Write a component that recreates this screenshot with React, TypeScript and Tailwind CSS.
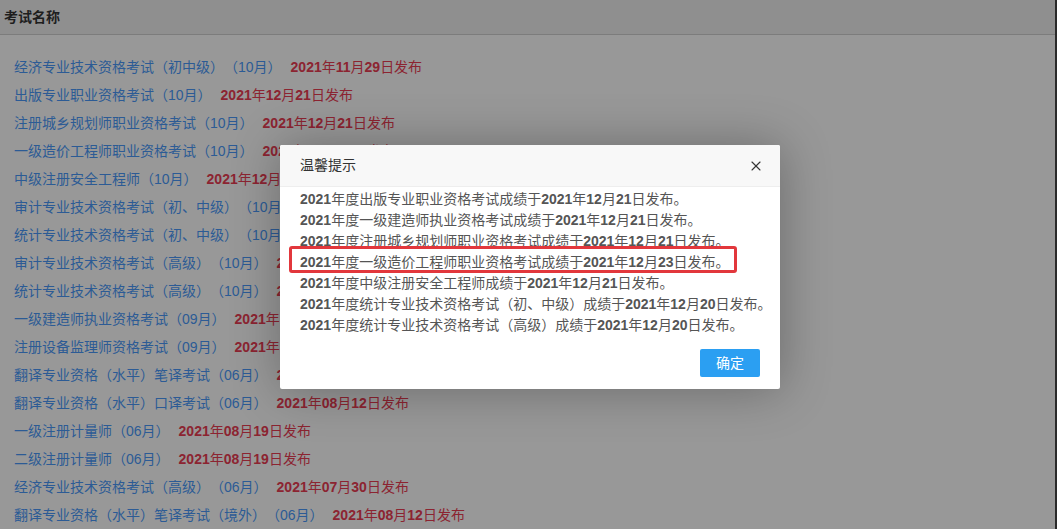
import { X } from 'lucide-react';

type Exam = { name: string; date: string };

const exams: Exam[] = [
  { name: '经济专业技术资格考试（初中级）（10月）', date: '2021年11月29日发布' },
  { name: '出版专业职业资格考试（10月）', date: '2021年12月21日发布' },
  { name: '注册城乡规划师职业资格考试（10月）', date: '2021年12月21日发布' },
  { name: '一级造价工程师职业资格考试（10月）', date: '2021年12月23日发布' },
  { name: '中级注册安全工程师（10月）', date: '2021年12月21日发布' },
  { name: '审计专业技术资格考试（初、中级）（10月）', date: '2021年12月20日发布' },
  { name: '统计专业技术资格考试（初、中级）（10月）', date: '2021年12月20日发布' },
  { name: '审计专业技术资格考试（高级）（10月）', date: '2021年12月20日发布' },
  { name: '统计专业技术资格考试（高级）（10月）', date: '2021年12月20日发布' },
  { name: '一级建造师执业资格考试（09月）', date: '2021年12月21日发布' },
  { name: '注册设备监理师资格考试（09月）', date: '2021年12月21日发布' },
  { name: '翻译专业资格（水平）笔译考试（06月）', date: '2021年08月12日发布' },
  { name: '翻译专业资格（水平）口译考试（06月）', date: '2021年08月12日发布' },
  { name: '一级注册计量师（06月）', date: '2021年08月19日发布' },
  { name: '二级注册计量师（06月）', date: '2021年08月19日发布' },
  { name: '经济专业技术资格考试（高级）（06月）', date: '2021年07月30日发布' },
  { name: '翻译专业资格（水平）笔译考试（境外）（06月）', date: '2021年08月12日发布' },
];

const notices = [
  '2021年度出版专业职业资格考试成绩于2021年12月21日发布。',
  '2021年度一级建造师执业资格考试成绩于2021年12月21日发布。',
  '2021年度注册城乡规划师职业资格考试成绩于2021年12月21日发布。',
  '2021年度一级造价工程师职业资格考试成绩于2021年12月23日发布。',
  '2021年度中级注册安全工程师成绩于2021年12月21日发布。',
  '2021年度统计专业技术资格考试（初、中级）成绩于2021年12月20日发布。',
  '2021年度统计专业技术资格考试（高级）成绩于2021年12月20日发布。',
];

// 数字加粗，中文保持常规字重
function BoldNums({ text }: { text: string }) {
  return (
    <>
      {text.split(/(\d+)/).map((part, i) =>
        /^\d+$/.test(part) ? (
          <b key={i} className="font-bold">{part}</b>
        ) : (
          <span key={i}>{part}</span>
        )
      )}
    </>
  );
}

export default function App() {
  return (
    <div className="relative h-[529px] w-[1057px] overflow-hidden bg-[#989898] font-['Liberation_Sans','Noto_Sans_CJK_SC',sans-serif] text-[14px] [text-spacing-trim:space-all] border-r-2 border-[#2a2a2a]">
      {/* 表头 */}
      <div className="h-[35px] bg-[#8f8f8f] border-b border-[#7c7c7c] flex items-center pl-[4px]">
        <span className="font-bold text-[#1e1e1e]">考试名称</span>
      </div>

      {/* 考试列表 */}
      <ul className="pt-[18px] pl-[14px]">
        {exams.map(exam => (
          <li key={exam.name} className="h-[28px] leading-[28px] whitespace-nowrap">
            <span className="text-[#2c5b95]">{exam.name}</span>
            <span className="ml-[9px] text-[#8c2431]">
              <BoldNums text={exam.date} />
            </span>
          </li>
        ))}
      </ul>

      {/* 温馨提示弹窗 */}
      <div className="absolute left-[280px] top-[145px] w-[500px] bg-white rounded-[2px] shadow-[1px_1px_50px_rgba(0,0,0,0.3)]">
        <div className="relative h-[42px] bg-[#f8f8f8] border-b border-[#eeeeee] rounded-t-[2px] flex items-center pl-[20px]">
          <span className="text-[#333]">温馨提示</span>
          <X size={16} strokeWidth={1.6} className="absolute right-[16px] top-[13px] text-[#333]" />
        </div>

        <div className="pt-[2px] pl-[20px] text-[#555]">
          {notices.map((line, i) => (
            <p key={i} className="relative h-[21px] leading-[21px] whitespace-nowrap">
              <BoldNums text={line} />
              {i === 3 && (
                <span className="absolute left-[-11px] top-[-6px] w-[448px] h-[27px] border-[3px] border-[#e2373c] rounded-[3px]" />
              )}
            </p>
          ))}
        </div>

        <div className="flex justify-end pt-[13px] pb-[12px] pr-[20px]">
          <button className="w-[60px] h-[28px] rounded-[2px] bg-[#2b9ff2] text-white text-[14px]">
            确定
          </button>
        </div>
      </div>
    </div>
  );
}
